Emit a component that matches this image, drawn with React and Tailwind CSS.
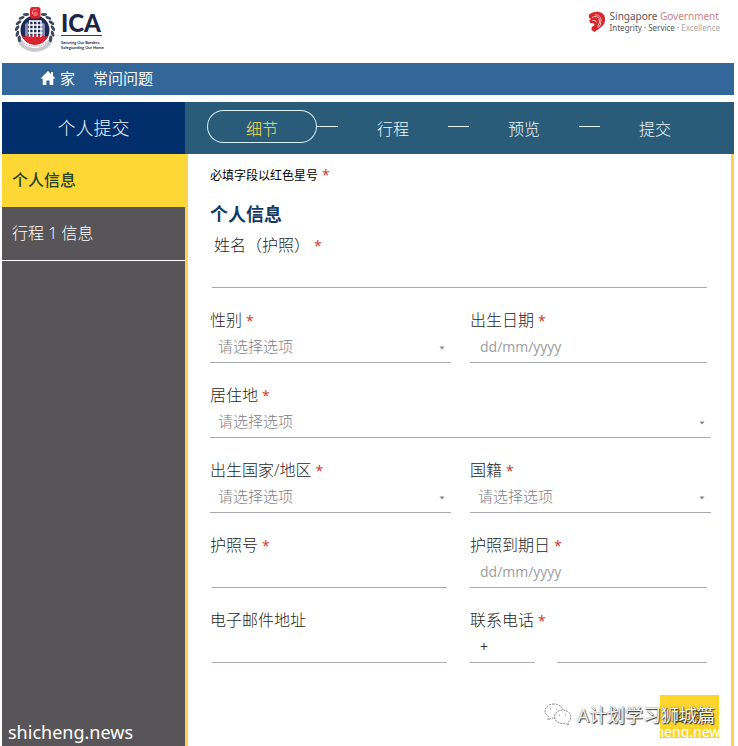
import React from "react";

const STEPS = ["细节", "行程", "预览", "提交"];
const LINE = "h-[31px] w-full border-b border-[#a9a9b4] bg-transparent pb-0.5 outline-none rounded-none";

function Star() {
  return <span className="ml-1 text-sm font-normal leading-none text-[#d0342c]">*</span>;
}

function Label({ id, text, required = true, className = "" }) {
  return (
    <label htmlFor={id} className={"block h-6 text-base leading-6 text-[#1f1f24] " + className}>
      {text}
      {required && <Star />}
    </label>
  );
}

function TextField({ id, label, required, placeholder, indent = false, className = "", labelClass }) {
  return (
    <div className={className}>
      <Label id={id} text={label} required={required} className={labelClass} />
      <div className={indent ? "pl-0.5 pr-1" : "pr-1"}>
        <input
          id={id}
          type="text"
          placeholder={placeholder}
          className={LINE + " px-2.5 text-sm font-normal text-[#333338] placeholder:text-[#9c9ca0]"}
        />
      </div>
    </div>
  );
}

function SelectField({ id, label, className = "" }) {
  return (
    <div className={className}>
      <Label id={id} text={label} />
      <div className="relative">
        <select id={id} defaultValue="" className={LINE + " appearance-none px-2 text-[15px] text-[#808085]"}>
          <option value="">请选择选项</option>
        </select>
        <svg className="pointer-events-none absolute right-1.5 top-3.5 h-1 w-1.5" viewBox="0 0 6 4" aria-hidden="true">
          <path d="M0.5 0.5H5.5L3 3.5Z" fill="#85858c" />
        </svg>
      </div>
    </div>
  );
}

function Crest() {
  const leaves = [150, 168, 186, 204, 222, 240];
  return (
    <svg className="h-12 w-11" viewBox="0 0 44 48" aria-hidden="true">
      <path d="M4 32a18 15 0 0 0 36 0l-3-2a15 13 0 0 1-30 0z" fill="#c9c9cf" />
      <path d="M8 35a16 12 0 0 0 28 0" fill="none" stroke="#8e8a94" strokeWidth="1" strokeDasharray="1 1" />
      {leaves.map((a) => (
        <g key={a}>
          <ellipse cx="40" cy="25" rx="1.5" ry="3.2" fill="#3f465c" transform={`rotate(${a} 22 25) rotate(28 40 25)`} />
          <ellipse cx="40" cy="25" rx="1.5" ry="3.2" fill="#3f465c" transform={`rotate(${180 - a} 22 25) rotate(-28 40 25)`} />
        </g>
      ))}
      <circle cx="22" cy="25" r="14.5" fill="#1d2857" />
      <path d="M8.500 30.500a14.500 14.500 0 0 0 27 0l-4 2H12z" fill="#d9252f" />
      <path d="M10 32q12-5 24 0-3 7-12 7.500-9-.5-12-7.500z" fill="#d9252f" />
      <path d="M12 31V19l3-2v14zM32 31V19l-3-2v14z" fill="#7d87ae" />
      <g stroke="#fff" strokeWidth="1.400" fill="none">
        <path d="M16 16h12.500M15 20h14.500M15 24h14.500M15 28h14.500M16.500 16v16M20.300 16v16M24.200 16v16M28 16v16" />
      </g>
      <rect x="17" y="2" width="10.500" height="11.500" rx="2.500" fill="#e0222c" />
      <path d="M23.500 4.500a3 3 0 1 0 1 5M21 8h3.500" stroke="#ffb3b0" strokeWidth="1" fill="none" />
    </svg>
  );
}

function Lion() {
  return (
    <svg className="h-[22px] w-[18px]" viewBox="0 0 18 22" aria-hidden="true">
      <path d="M1 3.500Q5 0 10 .8q6 .7 7 6 .6 6-4 9.500L6.500 21 3.500 19l.3-3 2.700-2-.5-1.500L2 12l-.7-2.500L3 8 .8 6.500z" fill="#d8262c" />
      <path d="M4 6.500q5-2.500 7 1t-1.500 8M7 3.800q5.500 0 6 5.200t-3 8M4.500 9.500q3.500-.8 4 2" fill="none" stroke="#fff" strokeWidth=".7" />
    </svg>
  );
}

function Chat() {
  return (
    <svg className="h-6 w-7" viewBox="0 0 28 24" fill="none" stroke="#8c8c91" strokeWidth="1" strokeDasharray="2 1" aria-hidden="true">
      <path fill="#fff" d="M10 1C5 1 1 4 1 8c0 2.500 1.300 4.300 3.500 5.500L4 17l3.500-2 3 .4c5 0 8.500-3.400 8.500-7.400S15 1 10 1z" />
      <path fill="#fff" d="M18.500 7c-4.500 0-8 3-8 6.800s3.500 6.700 8 6.700l2.500-.4 3.500 2-.5-3c1.700-1.200 2.800-3 2.800-5.300C26.800 10 23 7 18.500 7z" />
      <path d="M6 6h1M12 6h1M15 12h1M21 12h1" />
    </svg>
  );
}

export default function App() {
  return (
    <div className="flex min-h-screen flex-col bg-white pl-0.5 pr-1 font-['Open_Sans','Noto_Sans_CJK_SC',sans-serif] font-light">
      <header className="flex h-[63px] items-start justify-between pl-[11px] pr-3.5 pt-[5px]">
        <div className="flex items-start gap-1">
          <Crest />
          <div className="pt-1.5 font-['Lato',sans-serif] text-[#1d2446]">
            <div className="w-[41px] border-b border-[#3a4060] text-2xl font-black leading-6">ICA</div>
            <p className="pt-1 text-[4px] font-bold leading-[5px]">
              Securing Our Borders,
              <br />
              Safeguarding Our Home
            </p>
          </div>
        </div>
        <div className="flex items-start gap-1 pt-1.5 font-['Noto_Sans',sans-serif] font-normal">
          <Lion />
          <div className="text-[#5b5558]">
            <p className="text-[10px] leading-[11px]">
              Singapore <span className="text-[#c98487]">Government</span>
            </p>
            <p className="text-[8px] leading-[11px]">
              Integrity · Service · <span className="text-[#a9a5a9]">Excellence</span>
            </p>
          </div>
        </div>
      </header>

      <nav className="flex h-8 items-center bg-[#336699] pb-0.5 pl-[38px] text-[15px] font-normal text-white">
        <a href="#home" className="flex items-center gap-1">
          <svg className="h-4 w-4" viewBox="0 0 16 16" fill="#fff" aria-hidden="true">
            <path d="M8 1 0.500 8.500H2.700V15H6.400V10.500H9.600V15H13.300V8.500H15.500L13 6V2H11V4z" />
          </svg>
          家
        </a>
        <a href="#faq" className="ml-[18px]">常问问题</a>
      </nav>

      <div className="mt-[7px] flex flex-1">
        <aside className="flex w-[183px] shrink-0 flex-col bg-[#575558] text-base text-white">
          <h1 className="h-[52px] bg-[#022f6b] text-center text-lg leading-[52px] text-[#e8f4fc]">个人提交</h1>
          <a href="#personal" className="block h-[53px] bg-[#fdd735] pl-2.5 font-medium leading-[53px] text-[#28431f]">
            个人信息
          </a>
          <a href="#trip" className="block h-[54px] border-b border-white pl-2.5 leading-[53px]">
            行程 1 信息
          </a>
          <p className="mt-auto pb-0.5 pl-1.5 font-['Noto_Sans',sans-serif] text-lg font-normal leading-6">shicheng.news</p>
        </aside>

        <div className="flex min-w-0 flex-1 flex-col">
          <ol className="flex h-[52px] items-start bg-[#2a5c7a] pl-[22px] pr-6 pt-2 text-base text-[#f2fafd]">
            {STEPS.map((step, i) => (
              <React.Fragment key={step}>
                {i > 0 && <li aria-hidden="true" className="mt-4 h-px w-[21px] bg-[#e4f3f3]" />}
                <li
                  className={
                    i === 0
                      ? "h-[33px] flex-1 rounded-full pt-[5px] text-center leading-7 text-[#f8e052] inset-ring inset-ring-[#d9f0f5]"
                      : "h-[33px] flex-1 pt-[5px] text-center leading-7"
                  }
                >
                  {step}
                </li>
              </React.Fragment>
            ))}
          </ol>

          <main className="flex-1 border-x-[3px] border-[#fbd34f] bg-white pb-2 pl-[22px] pt-3">
            <p className="h-5 text-xs font-normal leading-5 text-black">
              必填字段以红色星号
              <Star />
            </p>
            <h2 className="mt-3.5 text-lg font-bold leading-7 text-[#143a63]">个人信息</h2>
            <form>
              <div className="mt-[5px] grid grid-cols-2 gap-x-[19px] gap-y-5 pr-5">
                <TextField id="name" label="姓名（护照）" indent className="col-span-2" labelClass="pl-1" />
                <SelectField id="sex" label="性别" />
                <TextField id="birth" label="出生日期" placeholder="dd/mm/yyyy" />
                <SelectField id="residence" label="居住地" className="col-span-2" />
                <SelectField id="birthplace" label="出生国家/地区" />
                <SelectField id="nationality" label="国籍" />
                <TextField id="passport" label="护照号" indent />
                <TextField id="expiry" label="护照到期日" placeholder="dd/mm/yyyy" />
                <TextField id="email" label="电子邮件地址" required={false} indent />
                <div>
                  <Label id="phone" text="联系电话" />
                  <div className="flex gap-[22px] pr-1">
                    <div className="w-[65px] shrink-0">
                      <input aria-label="国家代码" defaultValue="+" className={LINE + " px-2.5 text-sm font-normal text-[#333338]"} />
                    </div>
                    <input id="phone" type="tel" className={LINE + " min-w-0 px-2.5 text-sm"} />
                  </div>
                </div>
              </div>
              <div className="relative mt-8 flex justify-end pr-3">
                <button type="button" className="h-[43px] w-[59px] bg-[#fcd62d] text-sm font-normal text-[#4f4a2a]">
                  继续
                </button>
                <div className="pointer-events-none absolute right-4 top-1.5 flex items-center gap-1.5 whitespace-nowrap">
                  <Chat />
                  <span className="text-lg font-normal leading-7 text-[#f4f4f4] [text-shadow:1px_1px_1px_#333,0_0_1px_#555]">
                    A计划学习狮城篇
                  </span>
                </div>
                <span className="pointer-events-none absolute -bottom-1 right-1 whitespace-nowrap font-['Noto_Sans',sans-serif] text-sm font-normal leading-5 text-white">
                  heng.news
                </span>
              </div>
            </form>
          </main>
        </div>
      </div>
    </div>
  );
}
